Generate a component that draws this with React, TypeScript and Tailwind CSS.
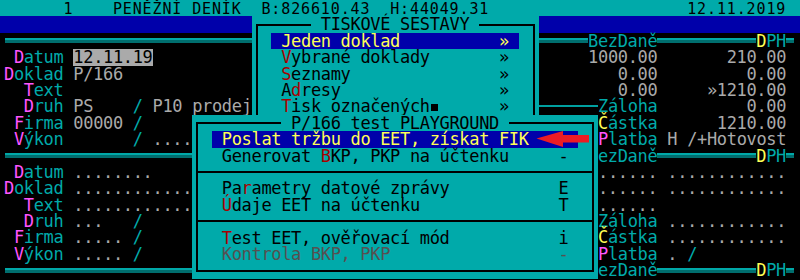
import type { ReactNode } from 'react';

// column 9.9px, row 16.4px, first column starts at x=4
type Seg = [number, string, string];

const TEAL = 'text-[#00aaaa]';
const MAG = 'text-[#ff55ff]';
const GRAY = 'text-[#aaaaaa]';
const YEL = 'text-[#ffff55]';
const RED = 'text-[#aa0000]';

function Row({ segs, className = '' }: { segs: Seg[]; className?: string }) {
  const out: ReactNode[] = [];
  let cur = 0;
  segs.forEach(([c, t, k], i) => {
    if (c > cur) out.push(' '.repeat(c - cur));
    if (k === 'line') {
      out.push(
        <span key={i} className="inline-block align-top h-[16.4px] w-[59.4px] pt-[7px]">
          <span className="block h-[2px] bg-[#00a0a0]" />
        </span>
      );
    } else {
      out.push(
        <span key={i} className={`inline-block align-top h-[16.4px] ${k}`}>
          {t}
        </span>
      );
    }
    cur = c + Array.from(t).length;
  });
  return <div className={`h-[16.4px] pl-[4px] ${className}`}>{out}</div>;
}

function Dbl({ className }: { className: string }) {
  return (
    <div className={`flex flex-col shrink-0 ${className}`}>
      <div className="h-[2px] bg-[#00a8a8]" />
      <div className="h-[3px] bg-[#006e6e]" />
    </div>
  );
}

function Sep() {
  return (
    <div className="h-[16.4px] flex items-center">
      <div className="w-[5px] shrink-0" />
      <Dbl className="w-[583px]" />
      <span className={TEAL}>BezDaně</span>
      <Dbl className="w-[99px]" />
      <span className={YEL}>D</span>
      <span className={TEAL}>PH</span>
      <Dbl className="w-[8px]" />
    </div>
  );
}

type Part = [string, string?];

function Item({ parts, right, hi, bar }: { parts: Part[]; right: string; hi?: boolean; bar: string }) {
  return (
    <div className="h-[16.4px] pl-[19.8px] flex relative">
      <div className={`flex justify-between ${bar} ${hi ? 'bg-[#0000aa] text-[#ffff55]' : 'text-black'}`}>
        <span>
          {' '}
          {parts.map(([t, k], i) => (
            <span key={i} className={k}>
              {t}
            </span>
          ))}
        </span>
        <span>{right + ' '}</span>
      </div>
    </div>
  );
}

function Divider() {
  return (
    <div className="h-[16.4px] flex items-center px-[4px] relative">
      <div className="h-[2px] w-full bg-black" />
    </div>
  );
}

function PrintMenu() {
  const bar = 'w-[247.5px]';
  return (
    <div className="absolute left-[251.5px] top-[16.4px] w-[287.1px] h-[114.8px] bg-[#00aaaa]">
      <div className="absolute left-[4px] right-[4px] top-[7.2px] bottom-[-20px] border-2 border-black" />
      <div className="h-[16.4px] flex justify-center relative">
        <span className="bg-[#00aaaa] text-black">{' TISKOVÉ SESTAVY '}</span>
      </div>
      <Item bar={bar} hi parts={[['Jeden doklad']]} right="»" />
      <Item bar={bar} parts={[['V', RED], ['ybrané doklady']]} right="»" />
      <Item bar={bar} parts={[['S', RED], ['eznamy']]} right="»" />
      <Item bar={bar} parts={[['A'], ['d', RED], ['resy']]} right="»" />
      <div className="h-[16.4px] pl-[19.8px] flex relative text-black">
        <div className={`flex justify-between ${bar}`}>
          <span>
            {' '}
            <span className={RED}>T</span>
            isk označených
            <span className="inline-flex align-top w-[9.9px] h-[16.4px] justify-center pt-[6px]">
              <span className="block w-[7px] h-[7px] bg-black" />
            </span>
          </span>
          <span>{'» '}</span>
        </div>
      </div>
    </div>
  );
}

function EetMenu() {
  const bar = 'w-[366.3px]';
  return (
    <div className="absolute left-[192.1px] top-[114.8px] w-[405.9px] h-[164px] bg-[#00aaaa]">
      <div className="absolute left-[4px] right-[4px] top-[7.2px] bottom-[7.2px] border-2 border-black" />
      <div className="h-[16.4px] flex justify-center relative">
        <span className="bg-[#00aaaa] text-black">{' P/166 test PLAYGROUND '}</span>
      </div>
      <Item bar={bar} hi parts={[['Poslat tržbu do EET, získat FIK']]} right=" " />
      <Item bar={bar} parts={[['Generovat '], ['B', RED], ['KP, PKP na účtenku']]} right="-" />
      <Divider />
      <Item bar={bar} parts={[['Pa'], ['r', RED], ['ametry datové zprávy']]} right="E" />
      <Item bar={bar} parts={[['Ú', RED], ['daje EET na účtenku']]} right="T" />
      <Divider />
      <Item bar={bar} parts={[['T', RED], ['est EET, ověřovací mód']]} right="i" />
      <div className="h-[16.4px] pl-[19.8px] flex relative text-[#575050]">
        <div className={`flex justify-between ${bar}`}>
          <span>{' Kontrola BKP, PKP'}</span>
          <span>{'- '}</span>
        </div>
      </div>
    </div>
  );
}

export default function App() {
  return (
    <div className="relative w-[800px] h-[280px] overflow-hidden bg-black whitespace-pre font-['DejaVu_Sans_Mono',monospace] text-[17px] leading-[16.4px] tracking-[-0.336px]">
      <div className="flex flex-col">
        <Row
          className="bg-[#00aaaa] text-black text-[15px] tracking-[0.87px] pt-[1px]"
          segs={[
            [6, '1', ''],
            [11, 'PENĚŽNÍ DENÍK', ''],
            [26, 'B:826610.43', ''],
            [39, 'H:44049.31', ''],
            [69, '12.11.2019', ''],
          ]}
        />
        <div className="h-[16.4px] bg-[#0000aa]" />
        <Sep />
        <Row segs={[[1, 'D', MAG], [2, 'atum', TEAL], [7, '12.11.19', 'bg-[#aaaaaa] text-black'], [59, '1000.00', GRAY], [73, '210.00', GRAY]]} />
        <Row segs={[[0, 'D', MAG], [1, 'oklad', TEAL], [7, 'P/166', GRAY], [62, '0.00', GRAY], [75, '0.00', GRAY]]} />
        <Row segs={[[2, 'T', MAG], [3, 'ext', TEAL], [62, '0.00', GRAY], [71, '»1210.00', GRAY]]} />
        <Row segs={[[2, 'D', MAG], [3, 'ruh', TEAL], [7, 'PS', GRAY], [13, '/', TEAL], [15, 'P10 prodej', GRAY], [54, '      ', 'line'], [60, 'Záloha', TEAL], [75, '0.00', GRAY]]} />
        <Row segs={[[1, 'F', MAG], [2, 'irma', TEAL], [7, '00000', GRAY], [13, '/', TEAL], [60, 'Č', YEL], [61, 'ástka', TEAL], [72, '1210.00', GRAY]]} />
        <Row segs={[[1, 'V', MAG], [2, 'ýkon', TEAL], [13, '/', TEAL], [15, '....', GRAY], [60, 'P', MAG], [61, 'latba', TEAL], [67, 'H', GRAY], [69, '/', GRAY], [70, '+Hotovost', GRAY]]} />
        <Sep />
        <Row segs={[[1, 'D', MAG], [2, 'atum', TEAL], [7, '........', GRAY], [60, '......', GRAY], [67, '............', GRAY]]} />
        <Row segs={[[0, 'D', MAG], [1, 'oklad', TEAL], [7, '............', GRAY], [60, '......', GRAY], [67, '............', GRAY]]} />
        <Row segs={[[2, 'T', MAG], [3, 'ext', TEAL], [7, '............', GRAY], [60, '......', GRAY]]} />
        <Row segs={[[2, 'D', MAG], [3, 'ruh', TEAL], [7, '...', GRAY], [13, '/', TEAL], [60, 'Záloha', TEAL], [67, '............', GRAY]]} />
        <Row segs={[[1, 'F', MAG], [2, 'irma', TEAL], [7, '.....', GRAY], [13, '/', TEAL], [60, 'Č', YEL], [61, 'ástka', TEAL], [67, '............', GRAY]]} />
        <Row segs={[[1, 'V', MAG], [2, 'ýkon', TEAL], [7, '.....', GRAY], [13, '/', TEAL], [60, 'P', MAG], [61, 'latba', TEAL], [67, '.', GRAY], [69, '/', TEAL]]} />
        <Sep />
      </div>

      <PrintMenu />
      <EetMenu />

      <svg className="absolute left-[535px] top-[129px]" width="56" height="20" viewBox="0 0 56 20">
        <polygon points="1.5,9.5 28,2 28,6 54,6 54,13.5 28,13.5 28,18" fill="#ec1c24" />
      </svg>
    </div>
  );
}
